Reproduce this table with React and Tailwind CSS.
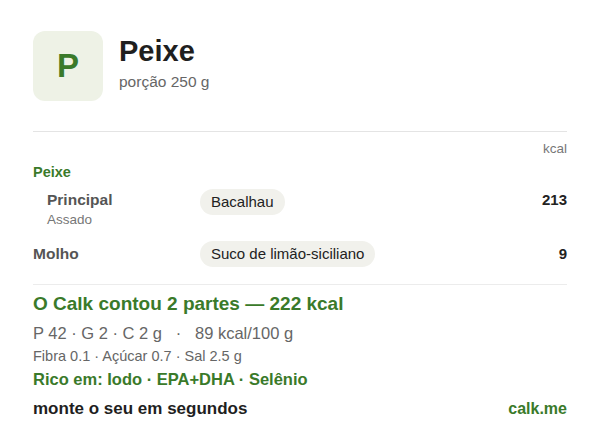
export default function App() {
    // carte de résumé du prato
    return (
        <div className="w-[600px] h-[433px] bg-white px-[33px] pt-[31px] font-['Liberation_Sans',Arial,sans-serif] text-[#222]">
            <div className="flex items-start gap-4">
                <div className="w-[70px] h-[70px] rounded-[12px] bg-[#eef2e6] flex items-center justify-center text-[33px] font-bold text-[#3a7a2a]">P</div>
                <div className="flex flex-col mt-[3px]">
                    <h1 className="text-[29px] leading-[34px] font-bold text-[#1f1f1f]">Peixe</h1>
                    <p className="text-[15.5px] leading-[20px] text-[#666] mt-[4px]">porção 250 g</p>
                </div>
            </div>

            <div className="h-px bg-[#e4e4e4] mt-[30px]" />

            <div className="text-right text-[13.5px] leading-[16px] text-[#777] mt-[9px]">kcal</div>
            <div className="text-[14.5px] leading-[18px] font-bold text-[#3a7a2a] mt-[6px]">Peixe</div>

            <div className="flex items-start mt-[9px]">
                <div className="w-[167px] pl-[14px]">
                    <div className="text-[15.5px] leading-[20px] font-bold text-[#555]">Principal</div>
                    <div className="text-[13.5px] leading-[16px] text-[#777] mt-[2px]">Assado</div>
                </div>
                <div className="flex-1">
                    <span className="inline-block bg-[#f1f1ec] rounded-full px-[11px] h-[26px] leading-[26px] text-[15px] text-[#222] mt-[-3px]">Bacalhau</span>
                </div>
                <div className="text-[15px] leading-[20px] font-bold text-[#222]">213</div>
            </div>

            <div className="flex items-center mt-[13px]">
                <div className="w-[167px] text-[15.5px] leading-[20px] font-bold text-[#555]">Molho</div>
                <div className="flex-1">
                    <span className="inline-block bg-[#f1f1ec] rounded-full px-[11px] h-[26px] leading-[26px] text-[15px] text-[#222]">Suco de limão-siciliano</span>
                </div>
                <div className="text-[15px] leading-[20px] font-bold text-[#222]">9</div>
            </div>

            <div className="h-px bg-[#ececec] mt-[17px]" />

            <div className="text-[19px] leading-[24px] font-bold text-[#3a7a2a] mt-[7px]">O Calk contou 2 partes — 222 kcal</div>
            <div className="text-[16.5px] leading-[22px] text-[#666] mt-[6px] whitespace-pre">P 42 · G 2 · C 2 g   ·   89 kcal/100 g</div>
            <div className="text-[14.5px] leading-[18px] text-[#666] mt-[3px]">Fibra 0.1 · Açúcar 0.7 · Sal 2.5 g</div>
            <div className="text-[16.5px] leading-[20px] font-bold text-[#3a7a2a] mt-[4px]">Rico em: Iodo · EPA+DHA · Selênio</div>

            <div className="flex items-center justify-between mt-[9px]">
                <span className="text-[17px] leading-[22px] font-bold text-[#1f1f1f]">monte o seu em segundos</span>
                <span className="text-[16px] leading-[22px] font-bold text-[#3a7a2a]">calk.me</span>
            </div>
        </div>
    );
}
